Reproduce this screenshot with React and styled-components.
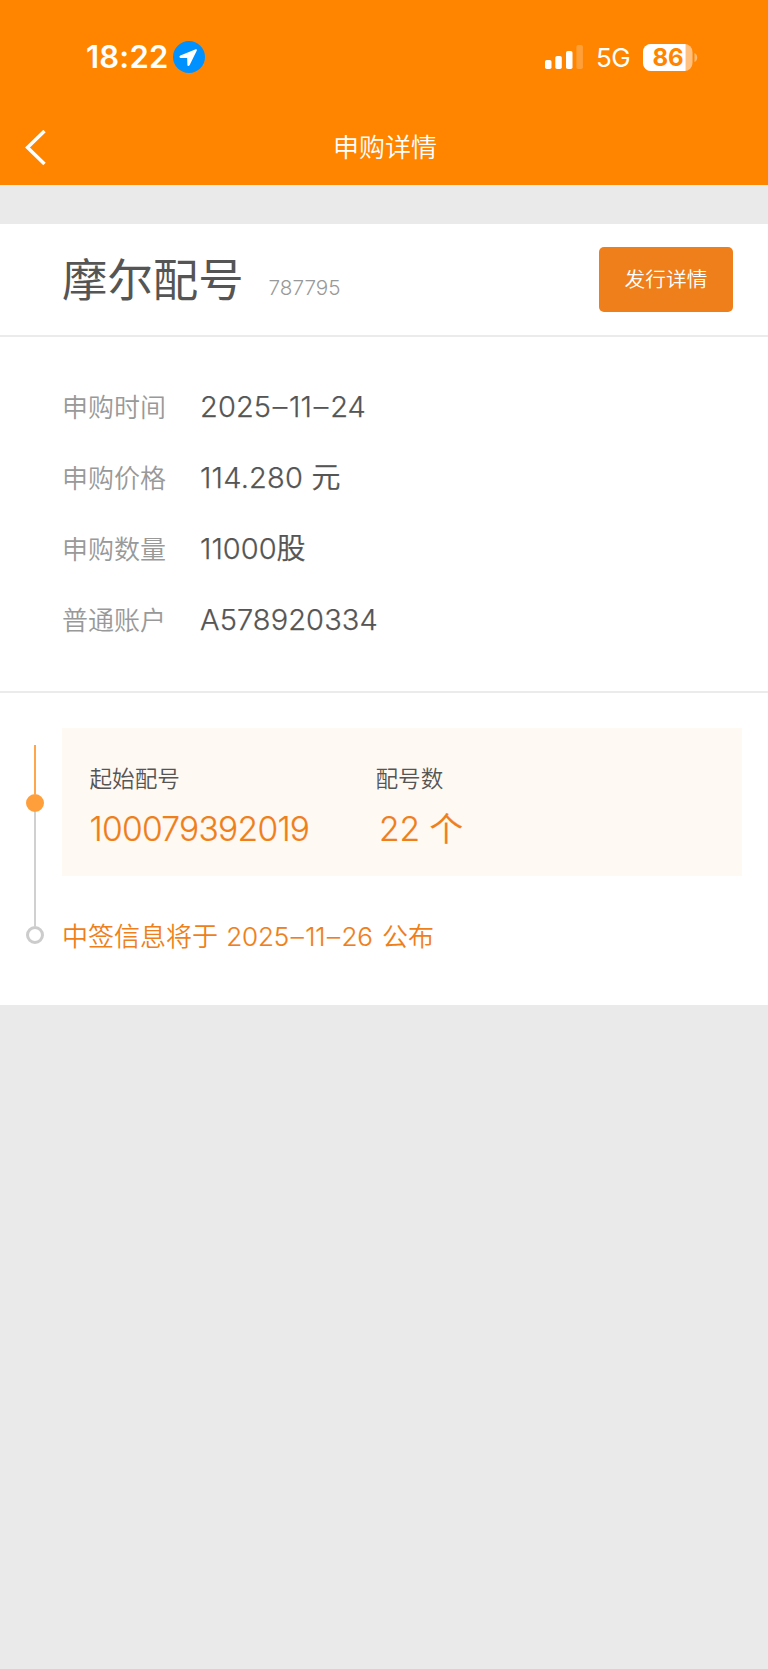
import React from 'react';
import styled, { createGlobalStyle } from 'styled-components';

const GlobalStyle = createGlobalStyle`
  * {
    box-sizing: border-box;
  }

  body {
    margin: 0;
    background-color: #eaeaea;
    font-family: Inter, 'Noto Sans CJK SC', sans-serif;
    font-feature-settings: 'calt' 0;
    color: #555;
  }
`;

const Page = styled.div`
  width: 768px;
  min-height: 1669px;
  background-color: #eaeaea;
`;

// Status bar and title bar
const Header = styled.header`
  height: 185px;
  background-color: #ff8500;
  color: white;
`;

const StatusBar = styled.div`
  height: 114px;
  padding: 0 70px 0 86px;
  display: flex;
  align-items: center;
  justify-content: space-between;
`;

const StatusGroup = styled.div`
  display: flex;
  align-items: center;
`;

const Time = styled.span`
  width: 87px;
  font-size: 31px;
  font-weight: 600;
  line-height: 32px;
  letter-spacing: 0.2px;
`;

const Network = styled.span`
  margin: 2px 12px 0 13px;
  width: 35px;
  font-size: 26px;
  line-height: 32px;
  letter-spacing: -0.5px;
`;

const NavBar = styled.div`
  height: 67px;
  padding: 0 23px 0 25px;
  display: grid;
  grid-template-columns: 40px 1fr 40px;
  align-items: center;
`;

const BackButton = styled.button`
  padding: 0;
  border: none;
  background: none;
  display: flex;
  cursor: pointer;
`;

const NavTitle = styled.h1`
  margin: 0;
  font-size: 26px;
  font-weight: 350;
  line-height: 36px;
  text-align: center;
`;

// White panels
const Content = styled.main`
  margin-top: 38.5px;
  background-color: white;
`;

const StockBar = styled.section`
  height: 113.5px;
  padding: 0 35px 0 62px;
  border-bottom: 2px solid #ebebeb;
  display: flex;
  align-items: center;
  justify-content: space-between;
`;

const Stock = styled.div`
  padding-top: 4px;
  display: flex;
  align-items: flex-end;
  gap: 25px;
`;

const StockName = styled.h2`
  margin: 0;
  font-size: 45.4px;
  font-weight: 400;
  line-height: 60px;
`;

const StockCode = styled.span`
  margin-bottom: 10px;
  font-size: 20.7px;
  font-weight: 350;
  line-height: 26px;
  color: #999;
`;

const DetailButton = styled.button`
  width: 134px;
  height: 65px;
  padding: 0 0 3px;
  border: none;
  border-radius: 5px;
  background-color: #ef7f1a;
  color: white;
  font-family: inherit;
  font-size: 20.7px;
  font-weight: 350;
  cursor: pointer;
`;

const InfoList = styled.dl`
  margin: 0;
  height: 356px;
  padding: 35px 62px 0;
  border-bottom: 2px solid #ebebeb;
`;

const InfoRow = styled.div`
  height: 71px;
  display: flex;
  align-items: center;
`;

const InfoLabel = styled.dt`
  width: 138px;
  font-size: 26px;
  font-weight: 350;
  line-height: 36px;
  color: #999;
`;

const InfoValue = styled.dd`
  margin: 0 0 2px;
  font-size: 29px;
  font-weight: 350;
  line-height: 36px;
  letter-spacing: ${(props) => props.$spacing}px;
  -webkit-text-stroke: 0.25px currentColor;
`;

const Dash = styled.span`
  margin: 0 1.7px;
`;

// Allotment timeline
const Timeline = styled.section`
  height: 312px;
  padding: 35px 26px 0;
  display: flex;
  gap: 18px;
`;

const Track = styled.div`
  width: 18px;
  padding-top: 17px;
  display: flex;
  flex-direction: column;
  align-items: center;
`;

const Line = styled.div`
  width: 2px;
  height: ${(props) => props.$length}px;
  background-color: ${(props) => (props.$active ? '#ffa64d' : '#d0d0d0')};
`;

const Dot = styled.div`
  width: 18px;
  height: 18px;
  border: 3px solid ${(props) => (props.$active ? '#ff9f3c' : '#ccc')};
  border-radius: 50%;
  background-color: ${(props) => (props.$active ? '#ff9f3c' : 'white')};
`;

const Steps = styled.div`
  flex: 1;
`;

const AllotCard = styled.div`
  height: 148px;
  padding: 33px 28px 0 27.5px;
  background-color: #fff9f3;
  display: grid;
  grid-template-columns: 286px 1fr;
`;

const AllotLabel = styled.div`
  font-size: 22.6px;
  font-weight: 350;
  line-height: 36px;
`;

const AllotValue = styled.div`
  margin-top: 14px;
  padding-left: ${(props) => props.$indent || 0}px;
  font-size: 33.5px;
  font-weight: 350;
  line-height: 36px;
  letter-spacing: ${(props) => props.$spacing}px;
  color: #ef7f1a;
  -webkit-text-stroke: 0.2px currentColor;
`;

const Notice = styled.p`
  margin: 41px 0 0;
  font-size: 26px;
  font-weight: 350;
  line-height: 40px;
  color: #ef7f1a;
`;

const NoticeDate = styled.span`
  margin: 0 2px 0 1px;
  letter-spacing: -0.2px;
  -webkit-text-stroke: 0.2px currentColor;
`;

const LocationIcon = () => (
  <svg width="32" height="32" viewBox="0 0 32 32">
    <circle cx="16" cy="16" r="16" fill="#0091ff" />
    <path
      d="M22.8 8.3 7.3 14.6c-1.4.7-1 2.2.2 2.3l6.4.2c.2 0 .3.1.3.3l.2 6.5c.1 1.4 1.7 1.5 2.3.2l7-14.4c.5-1.2-.1-1.8-.9-1.4Z"
      fill="white"
    />
  </svg>
);

const SignalIcon = () => (
  <svg width="38" height="24" viewBox="0 0 38 24" fill="white">
    <rect x="0" y="15" width="6.5" height="9" rx="1.8" />
    <rect x="10.3" y="11" width="6.5" height="13" rx="1.8" />
    <rect x="21" y="6" width="6.5" height="18" rx="1.8" />
    <rect x="31.4" y="0" width="6.5" height="24" rx="1.8" opacity="0.22" />
  </svg>
);

const BatteryIcon = ({ level }) => (
  <svg width="55" height="27" viewBox="0 0 55 27">
    <clipPath id="battery-shell">
      <rect width="49.5" height="27" rx="8" />
    </clipPath>
    <g clipPath="url(#battery-shell)">
      <rect width="50" height="27" fill="#ffc080" />
      <rect width={(level / 100) * 49.5} height="27" fill="white" />
    </g>
    <path d="M51.5 9v9c3.6-1.4 3.6-7.6 0-9Z" fill="#ffb870" />
    <text
      x="25"
      y="22"
      textAnchor="middle"
      fontFamily="Inter, sans-serif"
      fontSize="24"
      fontWeight="700"
      fill="#ff8500"
    >
      {level}
    </text>
  </svg>
);

const BackIcon = () => (
  <svg width="22" height="36" viewBox="0 0 22 36" fill="none">
    <path d="M19.5 1 2.500 17.500l17 16.500" stroke="white" strokeWidth="3.4" />
  </svg>
);

// Dates are set with a little air around each dash
const DateText = ({ value }) =>
  value.split('–').map((part, index) => (
    <React.Fragment key={index}>
      {index > 0 && <Dash>–</Dash>}
      {part}
    </React.Fragment>
  ));

const details = [
  { label: '申购时间', value: <DateText value="2025–11–24" />, spacing: 0.1 },
  { label: '申购价格', value: '114.280 元', spacing: 0.2 },
  { label: '申购数量', value: '11000股', spacing: 0 },
  { label: '普通账户', value: 'A578920334', spacing: 0.1 },
];

const App = () => {
  return (
    <Page>
      <GlobalStyle />
      <Header>
        <StatusBar>
          <StatusGroup>
            <Time>18:22</Time>
            <LocationIcon />
          </StatusGroup>
          <StatusGroup>
            <SignalIcon />
            <Network>5G</Network>
            <BatteryIcon level={86} />
          </StatusGroup>
        </StatusBar>
        <NavBar>
          <BackButton aria-label="返回">
            <BackIcon />
          </BackButton>
          <NavTitle>申购详情</NavTitle>
        </NavBar>
      </Header>

      <Content>
        <StockBar>
          <Stock>
            <StockName>摩尔配号</StockName>
            <StockCode>787795</StockCode>
          </Stock>
          <DetailButton>发行详情</DetailButton>
        </StockBar>

        <InfoList>
          {details.map((item) => (
            <InfoRow key={item.label}>
              <InfoLabel>{item.label}</InfoLabel>
              <InfoValue $spacing={item.spacing}>{item.value}</InfoValue>
            </InfoRow>
          ))}
        </InfoList>

        <Timeline>
          <Track>
            <Line $active $length={49} />
            <Dot $active />
            <Line $length={114} />
            <Dot />
          </Track>
          <Steps>
            <AllotCard>
              <div>
                <AllotLabel>起始配号</AllotLabel>
                <AllotValue $spacing={-0.7}>100079392019</AllotValue>
              </div>
              <div>
                <AllotLabel>配号数</AllotLabel>
                <AllotValue $indent={3.5} $spacing={0}>22 个</AllotValue>
              </div>
            </AllotCard>
            <Notice>
              中签信息将于{' '}
              <NoticeDate>
                <DateText value="2025–11–26" />
              </NoticeDate>{' '}
              公布
            </Notice>
          </Steps>
        </Timeline>
      </Content>
    </Page>
  );
};

export default App;
